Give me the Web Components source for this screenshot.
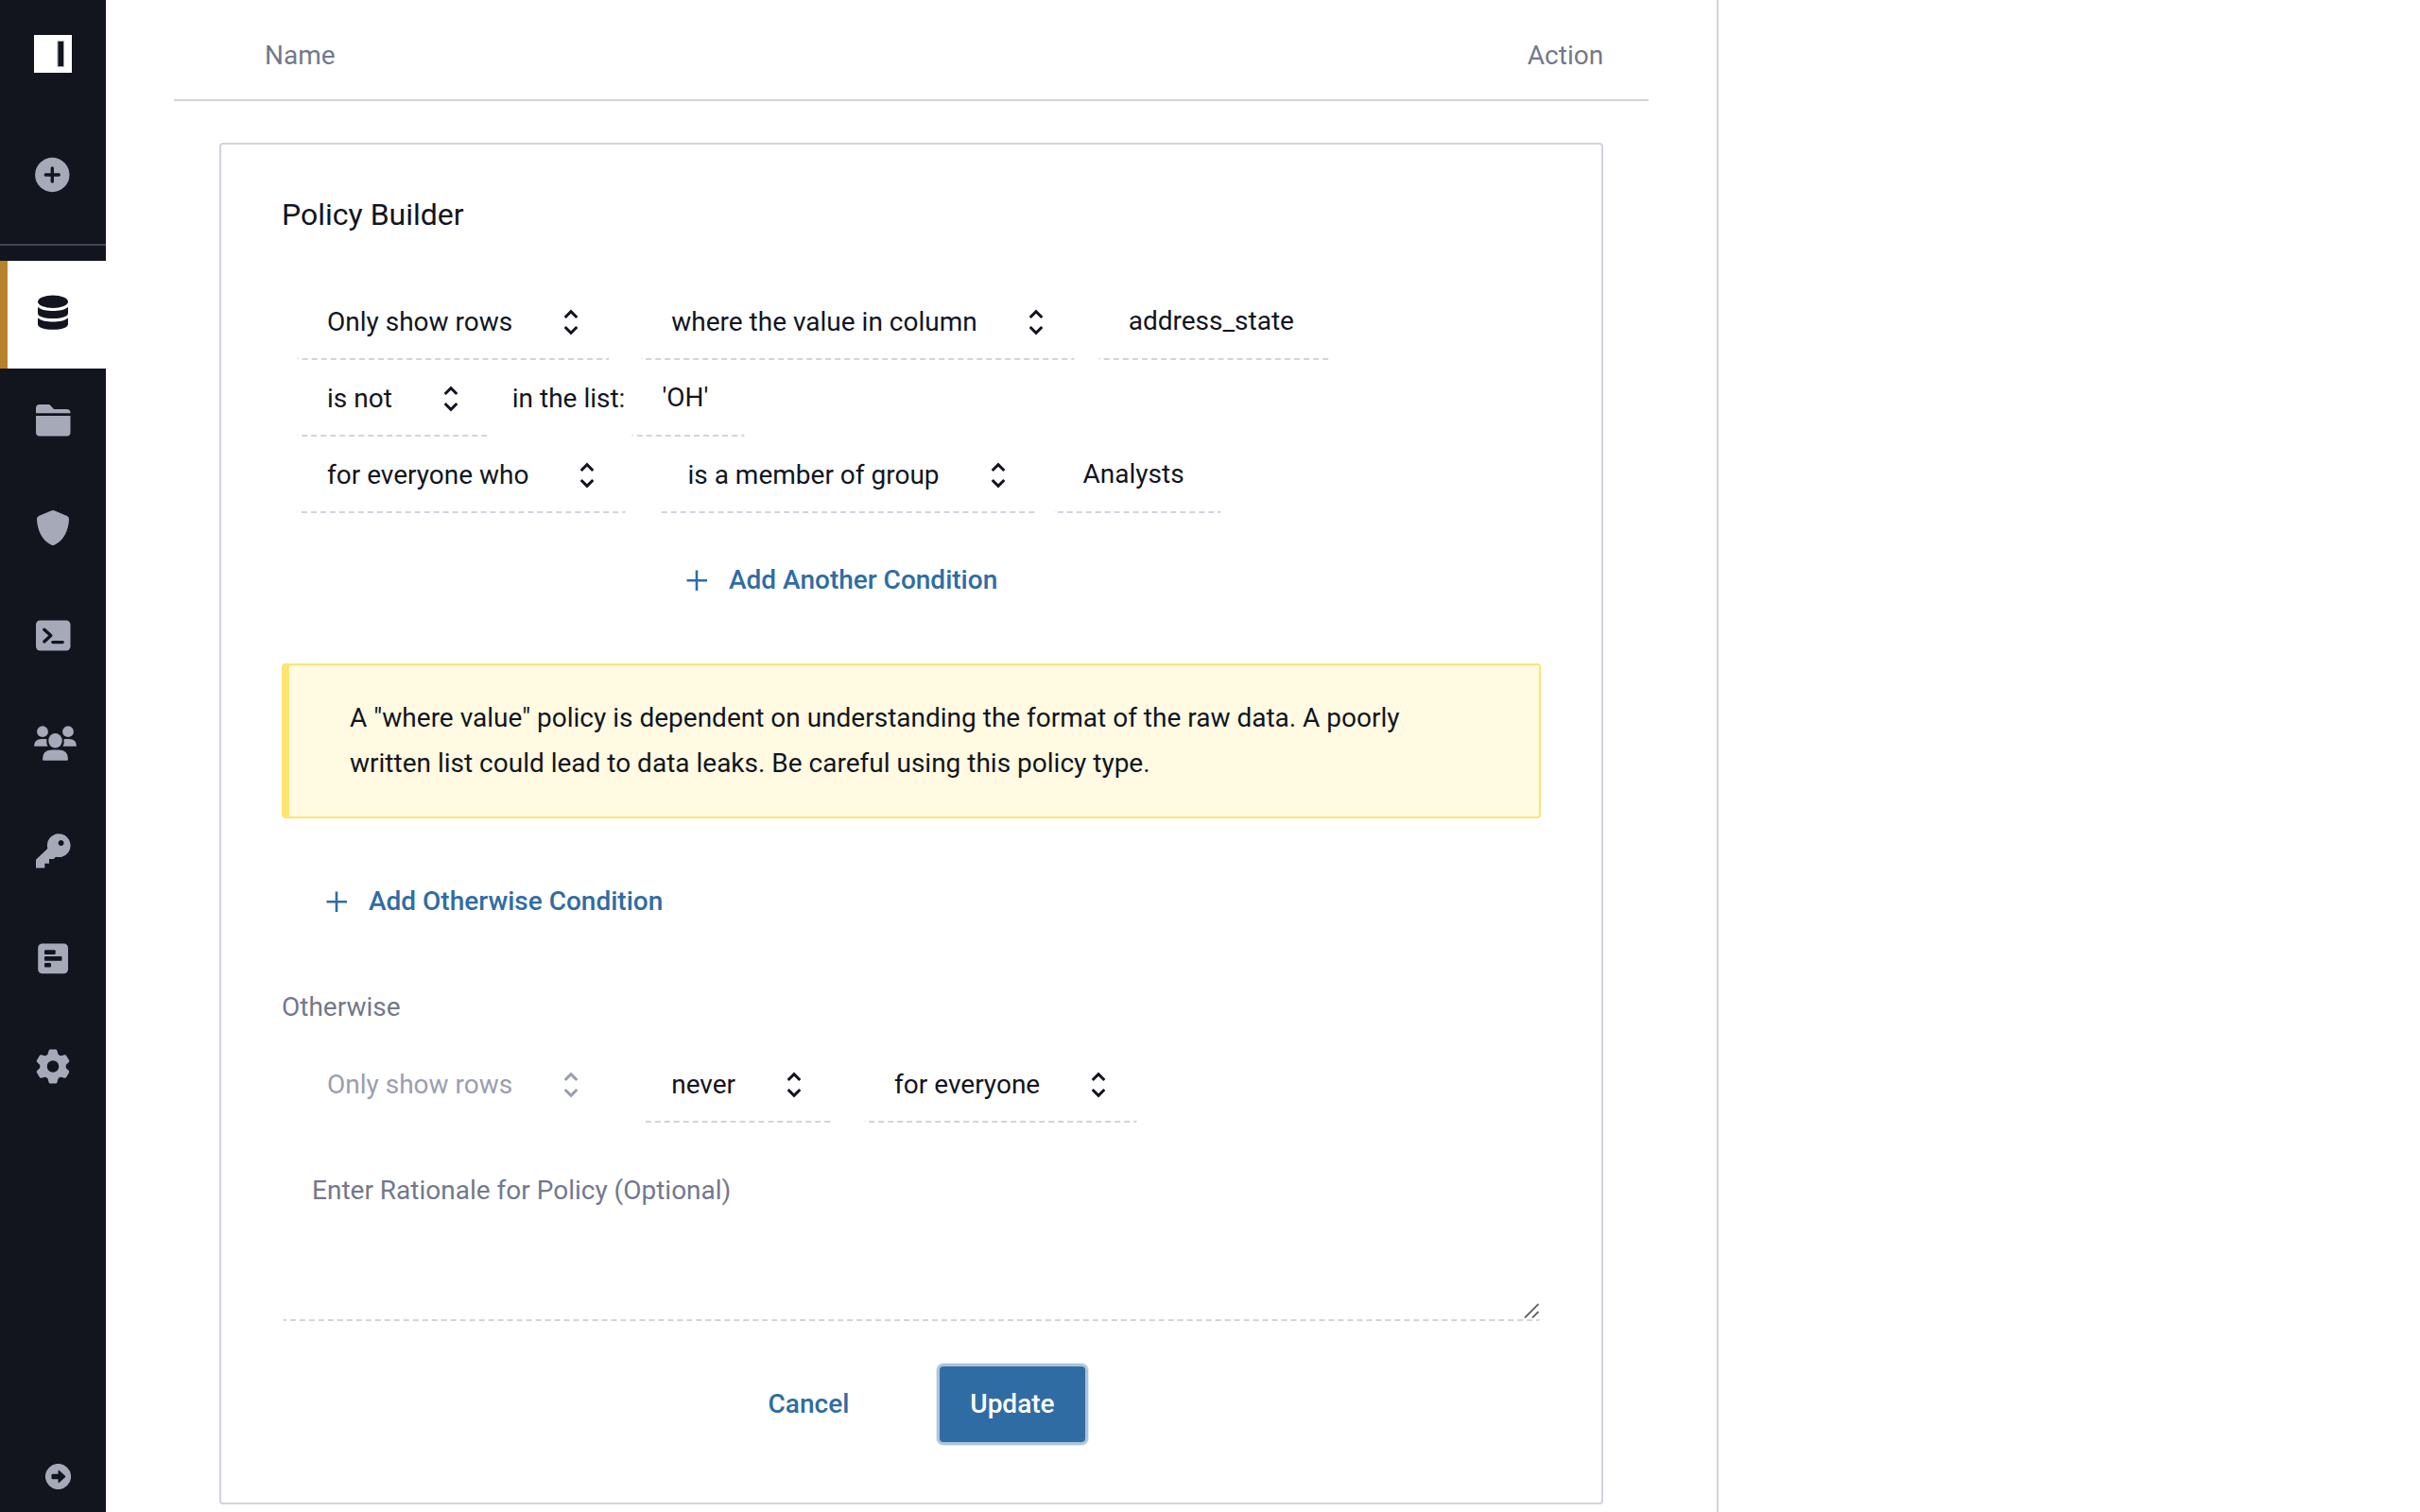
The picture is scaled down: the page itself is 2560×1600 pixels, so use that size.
<!DOCTYPE html>
<html lang="en">
<head>
<meta charset="utf-8">
<title>Policy Builder</title>
<style>
  html, body { margin: 0; }
  body {
    --ink: #12151e; --muted: #73788c; --line: #d1d4dc; --blue: #306ca4; --icon: #a6a9b8;
    font: 28px/40px Roboto, "Liberation Sans", sans-serif;
    color: var(--ink); background: #fff;
  }
</style>
</head>
<body>
<policy-app></policy-app>

<script>
const define = (name, html, setup) => customElements.define(name, class extends HTMLElement {
  constructor() {
    super();
    const t = document.createElement('template');
    t.innerHTML = html;
    this.attachShadow({ mode: 'open' }).append(t.content.cloneNode(true));
  }
  connectedCallback() { if (setup) setup(this, this.shadowRoot); }
});

const ICONS = {
  plus: '<circle cx="23.3" cy="24" r="18.2"/><path d="M23.3 17v14M16.3 24h14" stroke="#12151e" stroke-width="3.4" stroke-linecap="round"/>',
  database: '<ellipse cx="24" cy="10.2" rx="16" ry="6.7"/><path d="M8 16c4 3.2 10 4 16 4s12-.8 16-4v6.500c0 3.600-7 5.500-16 5.500s-16-1.900-16-5.500zM8 27.500c4 3.200 10 4 16 4s12-.8 16-4v6.500c0 3.600-7 5.800-16 5.800s-16-2.200-16-5.800z"/>',
  folder: '<path d="M6 14.300V9q0-4 4-4h9.500q1 0 1.800.9l3.700 4H38.500q4 0 4 4v.4zM6 17h36.500v17.500q0 4-4 4H10q-4 0-4-4z"/>',
  shield: '<path d="M24 3q1 0 2 .6l13 5.400q2.200 1 2 3.500C40.500 25 35 35 26 39.500q-2 1-4 0C13 35 7.500 25 7 12.500Q6.800 10 9 9l13-5.400q1-.6 2-.6z"/>',
  terminal: '<rect x="6" y="5.500" width="36.500" height="32" rx="4.500"/><path d="M14.800 15.300l7 6.300-7 6.300M23.800 28.600h10.400" fill="none" stroke="#12151e" stroke-width="3.400" stroke-linecap="round" stroke-linejoin="round"/>',
  users: '<circle cx="13" cy="9.200" r="5.900"/><circle cx="40" cy="9.200" r="5.900"/><ellipse cx="26.500" cy="18.700" rx="7.200" ry="7.700"/><path d="M4 24.800q0-7.800 8-7.800h4.500q1.600 0 .9 1.600-.8 3.600 1.200 6.200zM49 24.800q0-7.800-8-7.800h-4.500q-1.600 0-.9 1.600.8 3.600-1.200 6.200zM13 38.500q0-10 9.500-10h8q9.500 0 9.500 10 0 1.200-1.300 1.200H14.300q-1.300 0-1.300-1.200z"/>',
  key: '<path fill-rule="evenodd" d="M30 3.300a12.400 12.400 0 1 1-3 24.400l-2.200 2.300H20v4.800h-4.700V39.500H6V30.700L18.300 19A12.400 12.400 0 0 1 30 3.300zM32.600 10a3 3 0 1 0 .01 0z"/>',
  form: '<rect x="8.200" y="5.500" width="31.800" height="31.800" rx="4.500"/><g fill="#12151e"><rect x="15" y="12.300" width="11.700" height="4.700" rx="1"/><rect x="15" y="19" width="18.500" height="4.700" rx="1"/><rect x="15" y="26" width="7" height="4.500" rx="1"/></g>',
  gear: '<g transform="translate(24 21.500)"><circle r="10" fill="none" stroke="currentColor" stroke-width="7.500"/>' +
    [0, 60, 120, 180, 240, 300].map(a => `<path transform="rotate(${a})" d="M-5.800-11.500l1.300-5q.2-1.500 1.500-1.500h6q1.300 0 1.500 1.500l1.300 5z"/>`).join('') + '</g>'
};

define('nav-item', `
<style>
  :host { display: block; }
  a { display: flex; align-items: center; justify-content: center; height: 114px; box-sizing: border-box; color: var(--icon); }
  :host([active]) a { background: #fff; color: var(--ink); border-left: 8px solid #b8822c; padding-right: 8px; }
  svg { width: 48px; height: 48px; fill: currentColor; overflow: visible; }
</style>
<a href="#"><svg viewBox="0 0 48 48" aria-hidden="true"></svg></a>`, (host, root) => {
  root.querySelector('svg').innerHTML = ICONS[host.getAttribute('icon')];
  root.querySelector('a').setAttribute('aria-label', host.getAttribute('label'));
});

define('side-nav', `
<style>
  :host { display: flex; flex-direction: column; background: var(--ink); min-height: 100vh; }
  .top { border-bottom: 2px solid #434656; padding: 37px 0 16px; margin-bottom: 16px; }
  .logo { display: block; width: 40px; height: 40px; margin: 0 36px 51px; }
  .foot { margin: auto 0 24px 48px; width: 27px; height: 27px; display: block; }
  svg { display: block; }
</style>
<div class="top">
  <a class="logo" href="#" aria-label="Home"><svg width="40" height="40" viewBox="0 0 40 40"><path fill="#fff" d="M0 0h40v40H0z"/><path fill="#12151e" stroke="#a6a9b8" d="M25 6.500h6.500v27H25z"/></svg></a>
  <nav-item icon="plus" label="Create"></nav-item>
</div>
<nav aria-label="Main">
  <nav-item icon="database" label="Data" active></nav-item>
  <nav-item icon="folder" label="Projects"></nav-item>
  <nav-item icon="shield" label="Policies"></nav-item>
  <nav-item icon="terminal" label="Queries"></nav-item>
  <nav-item icon="users" label="People"></nav-item>
  <nav-item icon="key" label="Access"></nav-item>
  <nav-item icon="form" label="Reports"></nav-item>
  <nav-item icon="gear" label="Settings"></nav-item>
</nav>
<a class="foot" href="#" aria-label="Expand"><svg width="27" height="27" viewBox="0 0 27 27"><circle cx="13.500" cy="13.500" r="13.600" fill="#a6a9b8"/><path fill="#12151e" d="M7.500 10.800h6V8q0-1.800 1.400-.8l6 5.500q.8.800 0 1.600l-6 5.500q-1.400 1-1.400-.8v-2.800h-6q-1 0-1-1v-3.400q0-1 1-1z"/></svg></a>`);

define('inline-select', `
<style>
  :host { display: inline-grid; align-items: center; }
  select, svg { grid-area: 1 / 1; }
  select {
    appearance: none; field-sizing: content; font: inherit; color: inherit; background: none; opacity: 1;
    height: 81px; box-sizing: border-box; margin: 0; padding: 0 102px 0 31px;
    border: 2px dashed transparent; border-bottom-color: var(--line); border-radius: 4px;
  }
  svg { justify-self: end; margin-right: 34px; pointer-events: none; }
  :host([disabled]) { color: #9b9eae; }
  :host([disabled]) select { border-bottom-color: transparent; }
</style>
<select><option></option></select>
<svg width="16" height="28" viewBox="0 0 16 28" fill="none" stroke="currentColor" stroke-width="3" aria-hidden="true"><path d="M1.700 9L8 2.700 14.300 9M1.700 19L8 25.300 14.300 19"/></svg>`, (host, root) => {
  const s = root.querySelector('select');
  s.options[0].textContent = host.getAttribute('value');
  s.setAttribute('aria-label', host.getAttribute('label'));
  s.disabled = host.hasAttribute('disabled');
});

define('inline-input', `
<style>
  :host { display: inline-flex; }
  input {
    field-sizing: content; font: inherit; color: inherit; background: none;
    height: 81px; box-sizing: border-box; margin: 0; padding: 0 38px 2px 31px;
    border: 2px dashed transparent; border-bottom-color: var(--line); border-radius: 4px;
  }
</style>
<input type="text">`, (host, root) => {
  const i = root.querySelector('input');
  i.value = host.getAttribute('value');
  i.setAttribute('aria-label', host.getAttribute('label'));
});

define('ui-button', `
<style>
  :host { display: inline-flex; }
  button {
    display: inline-flex; align-items: center; gap: 20px; height: 80px; padding: 0 32px;
    font: inherit; font-weight: 500; color: var(--blue); background: none; border: 0; border-radius: 4px;
  }
  svg { display: none; }
  :host([add]) svg { display: block; }
  :host([add]) button { padding: 0 28px; }
  :host([primary]) button { background: var(--blue); color: #fff; box-shadow: 0 0 0 3px #acc4db, 0 0 0 4px #e3ebf3; }
</style>
<button type="button"><svg width="28" height="28" viewBox="0 0 28 28" fill="none" stroke="currentColor" stroke-width="2.600" aria-hidden="true"><path d="M14 3.500v21.500M3.500 14.300h21.500"/></svg><slot></slot></button>`);

define('ui-notice', `
<style>
  :host {
    display: block; padding: 32px 64px; line-height: 48px; background: #fffae1;
    border: 2px solid #ffe471; border-left-width: 8px; border-radius: 4px;
  }
</style>
<slot></slot>`);

define('rationale-box', `
<style>
  :host { display: grid; }
  textarea, svg { grid-area: 1 / 1; }
  textarea {
    display: block; width: 100%; height: 178px; box-sizing: border-box; margin: 0; padding: 18px 30px;
    font: inherit; color: inherit; background: none; resize: both;
    border: 2px dashed transparent; border-bottom-color: var(--line); border-radius: 4px;
  }
  textarea::placeholder { color: var(--muted); opacity: 1; }
  textarea::-webkit-resizer { display: none; }
  svg { place-self: end; margin: 0 2px 3px; pointer-events: none; }
</style>
<textarea aria-label="Rationale" placeholder="Enter Rationale for Policy (Optional)"></textarea>
<svg width="16" height="16" viewBox="0 0 16 16" stroke="#606060" stroke-width="1.800" aria-hidden="true"><path d="M1 15.500L15.500 1M9 15.500L15.500 9"/></svg>`);

define('policy-builder', `
<style>
  :host { display: flex; flex-direction: column; border: 2px solid var(--line); border-radius: 4px; padding: 54px 64px 64px; }
  h2 { margin: 0 0 53px; font-size: 32px; line-height: 40px; font-weight: 400; }
  .rows { padding-left: 15px; }
  .row { display: flex; align-items: center; }
  .g32 { margin-left: 31px; } .g24 { margin-left: 23px; } .g16 { margin-left: 15px; } .g8 { margin-left: 6px; }
  .another { padding-left: 382px; margin: 31px 0 48px; }
  .else { padding-left: 16px; margin: 48px 0 52px; }
  h3 { margin: 0 0 21px; font-size: 28px; line-height: 40px; font-weight: 400; color: var(--muted); }
  rationale-box { margin: 32px 0 48px; }
  .actions { display: flex; justify-content: center; gap: 64px; }
</style>
<h2>Policy Builder</h2>
<div class="rows">
  <div class="row">
    <inline-select label="Action" value="Only show rows"></inline-select>
    <inline-select class="g32" label="Condition" value="where the value in column"></inline-select>
    <inline-input class="g24" label="Column" value="address_state"></inline-input>
  </div>
  <div class="row">
    <inline-select label="Operator" value="is not"></inline-select>
    <span class="g24">in the list:</span>
    <inline-input class="g8" label="List" value="'OH'"></inline-input>
  </div>
  <div class="row">
    <inline-select label="Audience" value="for everyone who"></inline-select>
    <inline-select class="g32" label="Membership" value="is a member of group"></inline-select>
    <inline-input class="g16" label="Group" value="Analysts"></inline-input>
  </div>
  <div class="another"><ui-button add>Add Another Condition</ui-button></div>
</div>
<ui-notice>A "where value" policy is dependent on understanding the format of the raw data. A poorly written list could lead to data leaks. Be careful using this policy type.</ui-notice>
<div class="else"><ui-button add>Add Otherwise Condition</ui-button></div>
<h3>Otherwise</h3>
<div class="rows">
  <div class="row">
    <inline-select label="Otherwise action" value="Only show rows" disabled></inline-select>
    <inline-select class="g32" label="Otherwise condition" value="never"></inline-select>
    <inline-select class="g32" label="Otherwise audience" value="for everyone"></inline-select>
  </div>
</div>
<rationale-box></rationale-box>
<div class="actions"><ui-button>Cancel</ui-button><ui-button primary>Update</ui-button></div>`);

define('policy-table', `
<style>
  :host { display: block; }
  table { width: 100%; border-collapse: separate; border-spacing: 0; }
  th { font-weight: 400; color: var(--muted); text-align: left; padding: 39px 48px 26px 96px; border-bottom: 2px solid var(--line); }
  th:last-child { text-align: right; padding-left: 0; }
  td { padding: 44px 48px 0; }
</style>
<table>
  <thead><tr><th scope="col">Name</th><th scope="col">Action</th></tr></thead>
  <tbody><tr><td colspan="2"><slot></slot></td></tr></tbody>
</table>`);

define('policy-app', `
<style>
  :host { display: grid; grid-template-columns: 112px 2.3fr 1fr; min-height: 100vh; }
  main { padding: 0 72px; border-right: 2px solid var(--line); }
</style>
<side-nav></side-nav>
<main><policy-table><policy-builder></policy-builder></policy-table></main>`);
</script>
</body>
</html>
